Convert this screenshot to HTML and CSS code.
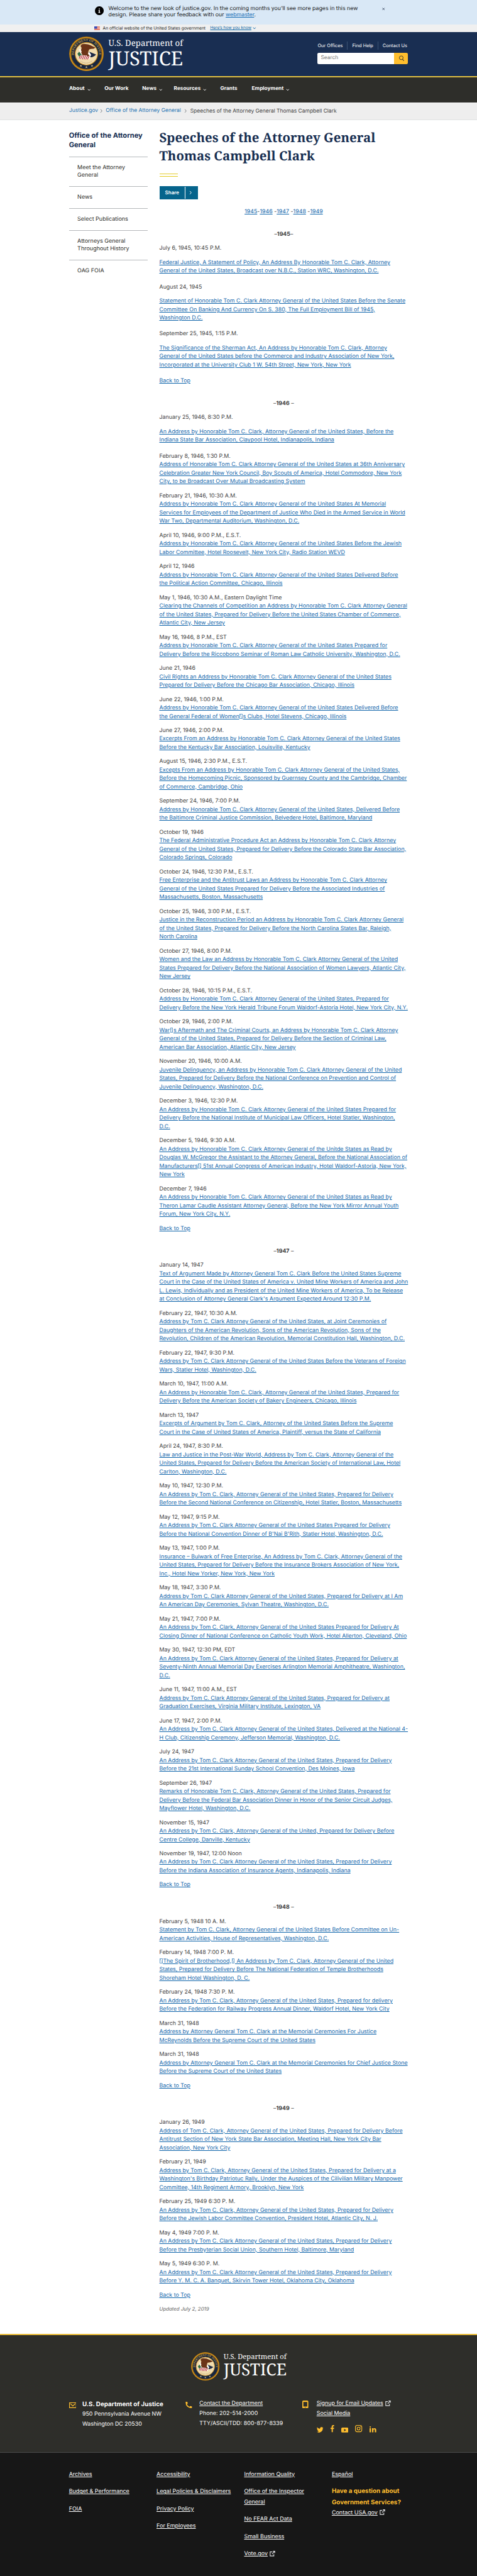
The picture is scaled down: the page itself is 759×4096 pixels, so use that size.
FILE: index.html
```html
<!DOCTYPE html>
<html lang="en">
<head>
<meta charset="utf-8">
<title>Speeches of the Attorney General Thomas Campbell Clark</title>
<link rel="stylesheet" href="styles.css">
</head>
<body>
<svg class="defs" aria-hidden="true">
  <symbol id="seal" viewBox="0 0 100 100">
    <circle cx="50" cy="50" r="50" fill="#8a5a10"/>
    <circle cx="50" cy="50" r="47.500" fill="none" stroke="#d99a20" stroke-width="2.600"/>
    <circle cx="50" cy="50" r="44.5" fill="#17263f"/>
    <circle cx="50" cy="50" r="44.5" fill="none" stroke="#b67a16" stroke-width="1"/>
    <circle cx="50" cy="50" r="32.5" fill="#f0dcae" stroke="#c98a1c" stroke-width="2"/>
    <path d="M24 50l5-6 7 8 4 3-1 3-11-1z" fill="#2c6b45"/>
    <path d="M28 37l10-1 3 14-6 2z" fill="#fff" opacity=".8"/>
    <path d="M58 44l20 8q-8 8-16 8l-6-8z" fill="#1c2944"/>
    <path d="M58 44l6 10-4 3-5-7z" fill="#fff"/>
    <path d="M36 23q6-3 11-1 8 0 14 3l15 7q-4 4-12 4l-6 1q-3 6-3 10l-2 8-5 3-8-2-5-9 1-5-2-2 2-7-3-6z" fill="#6b3418"/>
    <path d="M32 54l30 1-4 11-30-1z" fill="#fff"/>
    <path d="M33 55l-4 9M38 55l-5 10M43 55l-5 11M48 55l-5 11M53 56l-5 10M58 56l-5 10" stroke="#b3282d" stroke-width="2.200"/>
    <path d="M48 50l5-1 6 7-7 1z" fill="#6b3418"/>
    <path d="M33 71q17 12 34-1" fill="none" stroke="#b99b62" stroke-width="1.600" stroke-dasharray="2 1"/>
    <path d="M50 85l1 2.4 2.6.1-2 1.6.8 2.5-2.4-1.5-2.4 1.5.8-2.5-2-1.6 2.6-.1zM34 81l1 2.4 2.6.1-2 1.6.8 2.5-2.4-1.5-2.4 1.5.8-2.5-2-1.6 2.6-.1zM66 81l1 2.4 2.6.1-2 1.6.8 2.5-2.4-1.5-2.4 1.5.8-2.5-2-1.6 2.6-.1z" fill="#c9b98a"/>
  </symbol>
  <symbol id="down" viewBox="0 0 10 10"><path d="M1.500 3L5 6.800l3.500-3.800" fill="none" stroke="currentColor" stroke-width="1.700"/></symbol>
  <symbol id="right" viewBox="0 0 8 12"><path d="M2 1.500L6 6l-4 4.500" fill="none" stroke="currentColor" stroke-width="1.700"/></symbol>
  <symbol id="ext" viewBox="0 0 16 16"><path d="M7.500 3H1.500v11.500H12V9.500M9.500 1.200h5v5M14 1.700L7 9" fill="none" stroke="currentColor" stroke-width="2"/></symbol>
</svg>

<div class="alert">
  <svg class="alert-icon" viewBox="0 0 24 24"><circle cx="12" cy="12" r="12" fill="#000"/><path d="M10.700 6h2.600v2.600h-2.600zM10 10.200h3.300V16H14.500v1.800h-5V16h1.200v-4H9.800z" fill="#fff"/></svg>
  <p class="alert-text">Welcome to the new look of justice.gov. In the coming months you’ll see more pages in this new<br>design. Please share your feedback with our <a href="#">webmaster</a>.</p>
  <svg class="alert-close" viewBox="0 0 8 8"><path d="M1 1l6 6M7 1L1 7" stroke="#2b3a55" stroke-width="1.500"/></svg>
</div>

<div class="banner">
  <svg class="flag" viewBox="0 0 16 11"><path fill="#fff" d="M0 0h16v11H0z"/><path d="M0 .8h16M0 3.200h16M0 5.600h16M0 8h16M0 10.300h16" stroke="#db3e1f" stroke-width="1.300"/><path fill="#1e33b1" d="M0 0h8v6.300H0z"/><path d="M1 1.500h6M1.500 3.200h6M1 4.900h6" stroke="#fff" stroke-width=".6" stroke-dasharray=".8 1"/></svg>
  <span class="banner-text">An official website of the United States government</span>
  <a class="banner-link" href="#">Here’s how you know</a>
  <svg class="banner-arrow"><use href="#down"/></svg>
</div>

<header class="header">
  <svg class="seal" viewBox="0 0 100 100"><use href="#seal"/><path id="ring-top" d="M19.200 69.500A36.500 36.500 0 1 1 80.800 69.500" fill="none"/><text class="seal-text"><textPath href="#ring-top" startOffset="50%" text-anchor="middle">DEPARTMENT OF JUSTICE</textPath></text></svg>
  <div class="wordmark">
    <span class="wm-top">U.S. Department of</span>
    <span class="wm-main">JUSTICE</span>
  </div>
  <div class="header-tools">
    <div class="header-links"><a href="#">Our Offices</a><a href="#">Find Help</a><a href="#">Contact Us</a></div>
    <div class="search">
      <span class="search-input">Search</span>
      <span class="search-btn"><svg viewBox="0 0 16 16"><circle cx="7.500" cy="6.500" r="5" fill="none" stroke="#2e2e2a" stroke-width="1.500"/><path d="M10.800 10.500l3.600 4" stroke="#2e2e2a" stroke-width="1.800"/></svg></span>
    </div>
  </div>
</header>

<nav class="nav">
  <a class="n1" href="#">About<svg><use href="#down"/></svg></a>
  <a class="n2" href="#">Our Work</a>
  <a class="n3" href="#">News<svg><use href="#down"/></svg></a>
  <a class="n4" href="#">Resources<svg><use href="#down"/></svg></a>
  <a class="n5" href="#">Grants</a>
  <a class="n6" href="#">Employment<svg><use href="#down"/></svg></a>
</nav>

<div class="crumbs">
  <a class="c1" href="#">Justice.gov</a><svg><use href="#right"/></svg>
  <a class="c2" href="#">Office of the Attorney General</a><svg><use href="#right"/></svg>
  <span class="c3">Speeches of the Attorney General Thomas Campbell Clark</span>
</div>

<main class="main">
  <aside class="side">
    <h2>Office of the Attorney<br>General</h2>
    <ul>
      <li>Meet the Attorney<br>General</li>
      <li>News</li>
      <li>Select Publications</li>
      <li>Attorneys General<br>Throughout History</li>
      <li>OAG FOIA</li>
    </ul>
  </aside>

  <article class="content">
    <h1>Speeches of the Attorney General<br>Thomas Campbell Clark</h1>
    <div class="rule"></div>
    <div class="share"><span class="share-label">Share</span><span class="share-arrow"><svg><use href="#right"/></svg></span></div>

    <p class="years"><a href="#">1945</a><i>-</i><a href="#">1946</a><i> -</i><a href="#">1947</a><i> -</i><a href="#">1948</a><i> -</i><a href="#">1949</a></p>

    <h3>–<b>1945</b>–</h3>
    <p>July 6, 1945, 10:45 P.M.</p>
    <p class="spaced"><a href="#">Federal Justice, A Statement of Policy, An Address By Honorable Tom C. Clark, Attorney<br>General of the United States, Broadcast over N.B.C., Station WRC, Washington, D.C.</a></p>
    <p>August 24, 1945</p>
    <p class="spaced"><a href="#">Statement of Honorable Tom C. Clark Attorney General of the United States Before the Senate<br>Committee On Banking And Currency On S. 380, The Full Employment Bill of 1945,<br>Washington D.C.</a></p>
    <p>September 25, 1945, 1:15 P.M.</p>
    <p class="spaced"><a href="#">The Significance of the Sherman Act, An Address by Honorable Tom C. Clark, Attorney<br>General of the United States before the Commerce and Industry Association of New York,<br>Incorporated at the University Club 1 W. 54th Street, New York, New York</a></p>
    <p><a href="#">Back to Top</a></p>

    <h3>–<b>1946</b> –</h3>
    <p>January 25, 1946, 8:30 P.M.</p>
    <p class="spaced"><a href="#">An Address by Honorable Tom C. Clark, Attorney General of the United States, Before the<br>Indiana State Bar Association, Claypool Hotel, Indianapolis, Indiana</a></p>
    <p>February 8, 1946, 1:30 P.M.<br><a href="#">Address of Honorable Tom C. Clark Attorney General of the United States at 36th Anniversary<br>Celebration Greater New York Council, Boy Scouts of America, Hotel Commodore, New York<br>City, to be Broadcast Over Mutual Broadcasting System</a></p>
    <p>February 21, 1946, 10:30 A.M.<br><a href="#">Address by Honorable Tom C. Clark Attorney General of the United States At Memorial<br>Services for Employees of the Department of Justice Who Died in the Armed Service in World<br>War Two, Departmental Auditorium, Washington, D.C.</a></p>
    <p>April 10, 1946, 9:00 P.M., E.S.T.<br><a href="#">Address by Honorable Tom C. Clark Attorney General of the United States Before the Jewish<br>Labor Committee, Hotel Roosevelt, New York City, Radio Station WEVD</a></p>
    <p>April 12, 1946<br><a href="#">Address by Honorable Tom C. Clark Attorney General of the United States Delivered Before<br>the Political Action Committee, Chicago, Illinois</a></p>
    <p>May 1, 1946, 10:30 A.M., Eastern Daylight Time<br><a href="#">Clearing the Channels of Competition an Address by Honorable Tom C. Clark Attorney General<br>of the United States, Prepared for Delivery Before the United States Chamber of Commerce,<br>Atlantic City, New Jersey</a></p>
    <p>May 16, 1946, 8 P.M., EST<br><a href="#">Address by Honorable Tom C. Clark Attorney General of the United States Prepared for<br>Delivery Before the Riccobono Seminar of Roman Law Catholic University, Washington, D.C.</a></p>
    <p>June 21, 1946<br><a href="#">Civil Rights an Address by Honorable Tom C. Clark Attorney General of the United States<br>Prepared for Delivery Before the Chicago Bar Association, Chicago, Illinois</a></p>
    <p>June 22, 1946, 1:00 P.M.<br><a href="#">Address by Honorable Tom C. Clark Attorney General of the United States Delivered Before<br>the General Federal of Women<span class="box"></span>s Clubs, Hotel Stevens, Chicago, Illinois</a></p>
    <p>June 27, 1946, 2:00 P.M.<br><a href="#">Excerpts From an Address by Honorable Tom C. Clark Attorney General of the United States<br>Before the Kentucky Bar Association, Louisville, Kentucky</a></p>
    <p>August 15, 1946, 2:30 P.M., E.S.T.<br><a href="#">Excepts From an Address by Honorable Tom C. Clark Attorney General of the United States,<br>Before the Homecoming Picnic, Sponsored by Guernsey County and the Cambridge, Chamber<br>of Commerce, Cambridge, Ohio</a></p>
    <p>September 24, 1946, 7:00 P.M.<br><a href="#">Address by Honorable Tom C. Clark Attorney General of the United States, Delivered Before<br>the Baltimore Criminal Justice Commission, Belvedere Hotel, Baltimore, Maryland</a></p>
    <p>October 19, 1946<br><a href="#">The Federal Administrative Procedure Act an Address by Honorable Tom C. Clark Attorney<br>General of the United States, Prepared for Delivery Before the Colorado State Bar Association,<br>Colorado Springs, Colorado</a></p>
    <p>October 24, 1946, 12:30 P.M., E.S.T.<br><a href="#">Free Enterprise and the Antitrust Laws an Address by Honorable Tom C. Clark Attorney<br>General of the United States Prepared for Delivery Before the Associated Industries of<br>Massachusetts, Boston, Massachusetts</a></p>
    <p>October 25, 1946, 3:00 P.M., E.S.T.<br><a href="#">Justice in the Reconstruction Period an Address by Honorable Tom C. Clark Attorney General<br>of the United States, Prepared for Delivery Before the North Carolina States Bar, Raleigh,<br>North Carolina</a></p>
    <p>October 27, 1946, 8:00 P.M.<br><a href="#">Women and the Law an Address by Honorable Tom C. Clark Attorney General of the United<br>States Prepared for Delivery Before the National Association of Women Lawyers, Atlantic City,<br>New Jersey</a></p>
    <p>October 28, 1946, 10:15 P.M., E.S.T.<br><a href="#">Address by Honorable Tom C. Clark Attorney General of the United States, Prepared for<br>Delivery Before the New York Herald Tribune Forum Waldorf-Astoria Hotel, New York City, N.Y.</a></p>
    <p>October 29, 1946, 2:00 P.M.<br><a href="#">War<span class="box"></span>s Aftermath and The Criminal Courts, an Address by Honorable Tom C. Clark Attorney<br>General of the United States, Prepared for Delivery Before the Section of Criminal Law,<br>American Bar Association, Atlantic City, New Jersey</a></p>
    <p>November 20, 1946, 10:00 A.M.<br><a href="#">Juvenile Delinquency, an Address by Honorable Tom C. Clark Attorney General of the United<br>States, Prepared for Delivery Before the National Conference on Prevention and Control of<br>Juvenile Delinquency, Washington, D.C.</a></p>
    <p>December 3, 1946, 12:30 P.M.<br><a href="#">An Address by Honorable Tom C. Clark Attorney General of the United States Prepared for<br>Delivery Before the National Institute of Municipal Law Officers, Hotel Statler, Washington,<br>D.C.</a></p>
    <p>December 5, 1946, 9:30 A.M.<br><a href="#">An Address by Honorable Tom C. Clark Attorney General of the Unitde States as Read by<br>Douglas W. McGregor the Assistant to the Attorney General, Before the National Association of<br>Manufacturers<span class="box"></span> 51st Annual Congress of American Industry, Hotel Waldorf-Astoria, New York,<br>New York</a></p>
    <p>December 7, 1946<br><a href="#">An Address by Honorable Tom C. Clark Attorney General of the United States as Read by<br>Theron Lamar Caudle Assistant Attorney General, Before the New York Mirror Annual Youth<br>Forum, New York City, N.Y.</a></p>
    <p><a href="#">Back to Top</a></p>

    <h3>–<b>1947</b> –</h3>
    <p>January 14, 1947<br><a href="#">Text of Argument Made by Attorney General Tom C. Clark Before the United States Supreme<br>Court in the Case of the United States of America v. United Mine Workers of America and John<br>L. Lewis, Individually and as President of the United Mine Workers of America, To be Release<br>at Conclusion of Attorney General Clark's Argument Expected Around 12:30 P.M.</a></p>
    <p>February 22, 1947, 10:30 A.M.<br><a href="#">Address by Tom C. Clark Attorney General of the United States, at Joint Ceremonies of<br>Daughters of the American Revolution, Sons of the American Revolution, Sons of the<br>Revolution, Children of the American Revolution, Memorial Constitution Hall, Washington, D.C.</a></p>
    <p>February 22, 1947, 9:30 P.M.<br><a href="#">Address by Tom C. Clark Attorney General of the United States Before the Veterans of Foreign<br>Wars, Statler Hotel, Washington, D.C.</a></p>
    <p>March 10, 1947, 11:00 A.M.<br><a href="#">An Address by Honorable Tom C. Clark, Attorney General of the United States, Prepared for<br>Delivery Before the American Society of Bakery Engineers, Chicago, Illinois</a></p>
    <p>March 13, 1947<br><a href="#">Excerpts of Argument by Tom C. Clark, Attorney of the United States Before the Supreme<br>Court in the Case of United States of America, Plaintiff, versus the State of California</a></p>
    <p>April 24, 1947, 8:30 P.M.<br><a href="#">Law and Justice in the Post-War World, Address by Tom C. Clark, Attorney General of the<br>United States, Prepared for Delivery Before the American Society of International Law, Hotel<br>Carlton, Washington, D.C.</a></p>
    <p>May 10, 1947, 12:30 P.M.<br><a href="#">An Address by Tom C. Clark, Attorney General of the United States, Prepared for Delivery<br>Before the Second National Conference on Citizenship, Hotel Statler, Boston, Massachusetts</a></p>
    <p>May 12, 1947, 9:15 P.M.<br><a href="#">An Address by Tom C. Clark Attorney General of the United States Prepared for Delivery<br>Before the National Convention Dinner of B'Nai B'Rith, Statler Hotel, Washington, D.C.</a></p>
    <p>May 13, 1947, 1:00 P.M.<br><a href="#">Insurance – Bulwark of Free Enterprise, An Address by Tom C. Clark, Attorney General of the<br>United States, Prepared for Delivery Before the Insurance Brokers Association of New York,<br>Inc., Hotel New Yorker, New York, New York</a></p>
    <p>May 18, 1947, 3:30 P.M.<br><a href="#">Address by Tom C. Clark Attorney General of the United States, Prepared for Delivery at I Am<br>An American Day Ceremonies, Sylvan Theatre, Washington, D.C.</a></p>
    <p>May 21, 1947, 7:00 P.M.<br><a href="#">An Address by Tom C. Clark, Attorney General of the United States Prepared for Delivery At<br>Closing Dinner of National Conference on Catholic Youth Work, Hotel Allerton, Cleveland, Ohio</a></p>
    <p>May 30, 1947, 12:30 PM, EDT<br><a href="#">An Address by Tom C. Clark Attorney General of the United States, Prepared for Delivery at<br>Seventy-Ninth Annual Memorial Day Exercises Arlington Memorial Amphitheatre, Washington,<br>D.C.</a></p>
    <p>June 11, 1947, 11:00 A.M., EST<br><a href="#">Address by Tom C. Clark Attorney General of the United States, Prepared for Delivery at<br>Graduation Exercises, Virginia Military Institute, Lexington, VA</a></p>
    <p>June 17, 1947, 2:00 P.M.<br><a href="#">An Address by Tom C. Clark Attorney General of the United States, Delivered at the National 4-<br>H Club, Citizenship Ceremony, Jefferson Memorial, Washington, D.C.</a></p>
    <p>July 24, 1947<br><a href="#">An Address by Tom C. Clark Attorney General of the United States, Prepared for Delivery<br>Before the 21st International Sunday School Convention, Des Moines, Iowa</a></p>
    <p>September 26, 1947<br><a href="#">Remarks of Honorable Tom C. Clark, Attorney General of the United States, Prepared for<br>Delivery Before the Federal Bar Association Dinner in Honor of the Senior Circuit Judges,<br>Mayflower Hotel, Washington, D.C.</a></p>
    <p>November 15, 1947<br><a href="#">An Address by Tom C. Clark, Attorney General of the United, Prepared for Delivery Before<br>Centre College, Danville, Kentucky</a></p>
    <p>November 19, 1947, 12:00 Noon<br><a href="#">An Address by Tom C. Clark Attorney General of the United States, Prepared for Delivery<br>Before the Indiana Association of Insurance Agents, Indianapolis, Indiana</a></p>
    <p><a href="#">Back to Top</a></p>

    <h3>–<b>1948</b> –</h3>
    <p>February 5, 1948 10 A. M.<br><a href="#">Statement by Tom C. Clark, Attorney General of the United States Before Committee on Un-<br>American Activities, House of Representatives, Washington, D.C.</a></p>
    <p>February 14, 1948 7:00 P. M.<br><a href="#"><span class="box"></span>The Spirit of Brotherhood,<span class="box"></span> An Address by Tom C. Clark, Attorney General of the United<br>States, Prepared for Delivery Before The National Federation of Temple Brotherhoods<br>Shoreham Hotel Washington, D. C.</a></p>
    <p>February 24, 1948 7:30 P. M.<br><a href="#">An Address by Tom C. Clark, Attorney General of the United States, Prepared for delivery<br>Before the Federation for Railway Progress Annual Dinner, Waldorf Hotel, New York City</a></p>
    <p>March 31, 1948<br><a href="#">Address by Attorney General Tom C. Clark at the Memorial Ceremonies For Justice<br>McReynolds Before the Supreme Court of the United States</a></p>
    <p>March 31, 1948<br><a href="#">Address by Attorney General Tom C. Clark at the Memorial Ceremonies for Chief Justice Stone<br>Before the Supreme Court of the United States</a></p>
    <p><a href="#">Back to Top</a></p>

    <h3>–<b>1949</b> –</h3>
    <p>January 26, 1949<br><a href="#">Address of Tom C. Clark, Attorney General of the United States, Prepared for Delivery Before<br>Antitrust Section of New York State Bar Association, Meeting Hall, New York City Bar<br>Association, New York City</a></p>
    <p>February 21, 1949<br><a href="#">Address by Tom C. Clark, Attorney General of the United States, Prepared for Delivery at a<br>Washington's Birthday Patriotuc Rally, Under the Auspices of the Cilivilian Military Manpower<br>Committee, 14th Regiment Armory, Brooklyn, New York</a></p>
    <p>February 25, 1949 6:30 P. M.<br><a href="#">An Address by Tom C. Clark, Attorney General of the United States, Prepared for Delivery<br>Before the Jewish Labor Committee Convention, President Hotel, Atlantic City, N. J.</a></p>
    <p>May 4, 1949 7:00 P. M.<br><a href="#">An Address by Tom C. Clark Attorney General of the United States, Prepared for Delivery<br>Before the Presbyterian Social Union, Southern Hotel, Baltimore, Maryland</a></p>
    <p>May 5, 1949 6:30 P. M.<br><a href="#">An Address by Tom C. Clark Attorney General of the United States, Prepared for Delivery<br>Before Y. M. C. A. Banquet, Skirvin Tower Hotel, Oklahoma City, Oklahoma</a></p>
    <p><a href="#">Back to Top</a></p>
    <p class="updated">Updated July 2, 2019</p>
  </article>
</main>

<footer>
  <div class="foot-top">
    <div class="foot-logo">
      <svg class="seal" viewBox="0 0 100 100"><use href="#seal"/><path id="ring-foot" d="M19.200 69.500A36.500 36.500 0 1 1 80.800 69.500" fill="none"/><text class="seal-text"><textPath href="#ring-foot" startOffset="50%" text-anchor="middle">DEPARTMENT OF JUSTICE</textPath></text></svg>
      <div class="wordmark">
        <span class="wm-top">U.S. Department of</span>
        <span class="wm-main">JUSTICE</span>
      </div>
    </div>
    <div class="contacts">
      <div class="contact">
        <svg class="mail" viewBox="0 0 21 16"><path d="M1 1h19v14H1zM3.500 3.500l7 6.500 7-6.500" fill="none" stroke="#ffbe2e" stroke-width="2"/></svg>
        <div class="lines address"><strong>U.S. Department of Justice</strong><span>950 Pennsylvania Avenue NW</span><span>Washington DC 20530</span></div>
      </div>
      <div class="contact">
        <svg class="phone" viewBox="0 0 18 18"><path d="M0 1q0-1 1-1h3.300q.8 0 1 .9l.7 3.200q.1.700-.4 1.200L3.700 7q2.300 4.700 7.200 7.300l1.900-2q.5-.5 1.200-.3l3.200.8q.8.200.8 1V17q0 1-1 1Q9 18 4.500 13.500T0 1z" fill="#ffbe2e"/></svg>
        <div class="lines"><a href="#">Contact the Department</a><span>Phone: 202-514-2000</span><span>TTY/ASCII/TDD: 800-877-8339</span></div>
      </div>
      <div class="contact">
        <svg class="mobile" viewBox="0 0 17 22"><path fill-rule="evenodd" d="M3 0h11q3 0 3 3v16q0 3-3 3H3q-3 0-3-3V3q0-3 3-3zm0 4v13h11V4zm4 14.600v1.400h3v-1.400z" fill="#ffbe2e"/></svg>
        <div class="lines"><span><a href="#">Signup for Email Updates</a><svg class="ext"><use href="#ext"/></svg></span><a href="#">Social Media</a>
          <div class="social">
            <svg class="tw" viewBox="0 2 24 20"><path d="M24 4.600a10 10 0 0 1-2.800.8A5 5 0 0 0 23.300 2.700a10 10 0 0 1-3.100 1.200 4.900 4.900 0 0 0-8.400 4.500A14 14 0 0 1 1.700 3.200a4.900 4.900 0 0 0 1.500 6.500A5 5 0 0 1 1 9.100a4.900 4.900 0 0 0 4 4.900 5 5 0 0 1-2.200.1 4.900 4.900 0 0 0 4.600 3.400A9.900 9.900 0 0 1 0 19.500 14 14 0 0 0 21.500 7q1.500-1 2.500-2.400z"/></svg>
            <svg class="fb" viewBox="0 0 10 20"><path d="M3 20V11H0V7.500h3V5q0-5 4.500-5H10v3.500H8q-1.500 0-1.500 1.700v2.300H10L9.500 11h-3v9z"/></svg>
            <svg class="yt" viewBox="0 0 20 14"><path fill-rule="evenodd" d="M3 0h14q3 0 3 3v8q0 3-3 3H3q-3 0-3-3V3q0-3 3-3zm5 3.500v7l6-3.500z"/></svg>
            <svg class="ig" viewBox="0 0 20 20"><rect x="1" y="1" width="18" height="18" rx="5" fill="none" stroke="#ffbe2e" stroke-width="2"/><circle cx="10" cy="10" r="4.200" fill="none" stroke="#ffbe2e" stroke-width="2"/><circle cx="15.300" cy="4.700" r="1.200"/></svg>
            <svg class="li" viewBox="0 0 19 17"><path d="M0 5.500h4V17H0zM7 5.500h3.700V7q1-1.800 3.600-1.800Q19 5.200 19 10.500V17h-4v-6q0-2.500-1.900-2.500Q11 8.500 11 11.200V17H7z"/><circle cx="2" cy="2" r="2"/></svg>
          </div>
        </div>
      </div>
    </div>
  </div>
  <div class="foot-bottom">
    <ul><li><a href="#">Archives</a></li><li><a href="#">Budget &amp; Performance</a></li><li><a href="#">FOIA</a></li></ul>
    <ul><li><a href="#">Accessibility</a></li><li><a href="#">Legal Policies &amp; Disclaimers</a></li><li><a href="#">Privacy Policy</a></li><li><a href="#">For Employees</a></li></ul>
    <ul><li><a href="#">Information Quality</a></li><li><a href="#">Office of the Inspector<br>General</a></li><li><a href="#">No FEAR Act Data</a></li><li><a href="#">Small Business</a></li><li><a href="#">Vote.gov</a><svg class="ext"><use href="#ext"/></svg></li></ul>
    <ul><li class="lang"><a href="#">Español</a></li><li class="question">Have a question about<br>Government Services?</li><li><a href="#">Contact USA.gov</a><svg class="ext"><use href="#ext"/></svg></li></ul>
  </div>
</footer>
</body>
</html>
```
FILE: styles.css
```css
html { font-size: 5.622px; }
* { box-sizing: border-box; }
body {
  margin: 0;
  width: 759px;
  background: #fff;
  color: #3d3d3d;
  font: 1.575rem/2.4rem Inter, "Open Sans", sans-serif;
  text-rendering: geometricPrecision;
  white-space: nowrap;
}
p, h1, h2, h3, ul { margin: 0; padding: 0; }
ul { list-style: none; }
svg { display: block; flex: none; }
i { font-style: normal; }
.defs { position: absolute; width: 0; height: 0; }
.seal-text { font: bold 9.4px "Liberation Serif", serif; fill: #c9a24a; }

/* site alert */
.alert { display: flex; height: 6.95rem; padding: 1.55rem 0 0 26.9rem; background: #d9e8f6; }
.alert-icon { width: 2.5rem; height: 2.5rem; margin-top: .3rem; }
.alert-text { width: 74rem; margin-left: 1.3rem; font-size: 1.56rem; line-height: 1.85rem; color: #1b1b1b; }
.alert-text a { color: #1a6fb5; }
.alert-close { width: .8rem; height: .8rem; margin: .5rem 0 0 3.5rem; }

/* government banner */
.banner { display: flex; align-items: center; height: 2.18rem; padding-left: 26.7rem; background: #f0f0f0; font-size: 1.2rem; color: #1b1b1b; }
.flag { width: 1.6rem; height: 1.1rem; margin-right: .8rem; }
.banner-text { width: 30.4rem; }
.banner-link { width: 12.1rem; color: #005ea2; font-size: 1.163rem; }
.banner-arrow { width: 1rem; height: 1rem; color: #005ea2; }

/* header */
.header { display: flex; height: 12.8rem; padding: 1.25rem 0 0 19.6rem; background: #192e52; border-bottom: .4rem solid #e0bf42; color: #fff; }
.seal { width: 9.8rem; height: 9.8rem; }
.wordmark { display: flex; flex-direction: column; font-family: "Noto Serif", "Liberation Serif", serif; color: #fff; }
.header .wordmark { width: 60.5rem; padding: .25rem 0 0 1.3rem; }
.header .wm-top { font-size: 2.36rem; line-height: 3rem; }
.header .wm-main { font-size: 5.53rem; line-height: 5rem; margin-top: .37rem; }
.header-links { display: flex; padding-top: 1.35rem; font-size: 1.32rem; }
.header-links a { color: #fff; text-decoration: none; }
.header-links a + a { margin-left: 1.25rem; padding-left: 1.25rem; border-left: 1px solid #3b5273; }
.header-tools { width: 25.6rem; }
.search { display: flex; height: 3.2rem; margin-top: .85rem; }
.search-input { width: 21.7rem; padding: .4rem .9rem; border-radius: .4rem 0 0 .4rem; background: #fff; color: #757575; font-size: 1.49rem; }
.search-btn { display: grid; place-items: center; width: 3.9rem; border-radius: 0 .4rem .4rem 0; background: #ffbe2e; }
.search-btn svg { width: 1.7rem; height: 1.7rem; }

/* navigation */
.nav { display: flex; align-items: center; height: 7.08rem; padding: 0 0 .35rem 19.55rem; background: #2e2e2a; font-size: 1.478rem; font-weight: 700; }
.nav a { display: flex; align-items: center; color: #fff; text-decoration: none; }
.nav svg { width: 1rem; height: 1rem; margin: .3rem 0 0 .7rem; }
.n1 { width: 10rem; } .n2 { width: 10.7rem; } .n3 { width: 8.95rem; } .n4 { width: 13.15rem; } .n5 { width: 8.9rem; }

.crumbs { display: flex; align-items: center; height: 4.9rem; padding-left: 19.55rem; background: #eee; border-bottom: 1px solid #dfe1e2; border-top: 1px solid #f6f6f6; font-size: 1.506rem; }
.crumbs a { color: #2272b2; text-decoration: none; }
.crumbs svg { width: .8rem; height: 1.2rem; color: #71767a; }
.c1 { width: 8.75rem; } .c2 { width: 22.2rem; margin-left: .85rem; } .c3 { margin: .2rem 0 0 .9rem; }

/* page body */
.main { display: grid; grid-template-columns: 22.3rem 70.4rem; column-gap: 3.3rem; padding-left: 19.5rem; height: 626.1rem; }
.side { padding-top: 3.1rem; color: #2e2e2a; }
.side h2 { height: 7.2rem; font-size: 1.98rem; line-height: 2.75rem; color: #162e51; }
.side li { padding: 2rem 0 2rem 2.4rem; border-top: 1px solid #b5b8bb; font-size: 1.6rem; line-height: 2.1rem; }
.content { padding-top: 2.3rem; }
.content a { color: #1166ab; text-underline-offset: .2rem; text-decoration-thickness: 1px; }
h1 { font: bold 3.627rem/5.2rem "Noto Serif", "Liberation Serif", serif; color: #162e51; }
.rule { width: 5.2rem; height: .85rem; margin-top: 2.55rem; border-top: 1px solid #e3cc24; border-bottom: 1px solid #e3cc24; }
.share { display: flex; width: 10.9rem; height: 3.7rem; margin-top: 2.7rem; background: #05648c; color: #fff; font-size: 1.43rem; font-weight: 600; line-height: 3.6rem; }
.share-label { width: 7.2rem; padding-left: 1.6rem; }
.share-arrow { display: grid; align-items: center; width: 3.2rem; height: 3.5rem; margin-top: .1rem; padding-left: 1.1rem; border-left: 1px solid #fff; }
.share-arrow svg { width: .8rem; height: 1.2rem; }
.years { display: flex; justify-content: center; margin: 2.3rem 0 4rem; }
.years i { white-space: pre; }
h3 { margin: 4rem 0 1.6rem; font-size: 1.575rem; line-height: 2.4rem; font-weight: 400; text-align: center; }
.content p { margin-bottom: 1.6rem; }
.content .spaced { margin-bottom: 2.08rem; }
.content .updated { font-size: 1.4rem; font-style: italic; color: #5c5c5c; }
.box { display: inline-block; width: .85rem; height: 1.35rem; margin: 0 .1rem; vertical-align: -.2rem; border: 1px solid #6fa3cd; background: linear-gradient(to top right, transparent 40%, #6fa3cd 50%, transparent 60%); }

/* footer */
.foot-top { height: 33.7rem; border-top: .4rem solid #e9bc39; border-bottom: 1px solid #4a4a4a; background: #2e2e2a; color: #fff; font-size: 1.58rem; }
.foot-logo { display: flex; padding: 4.9rem 0 0 54rem; }
.foot-logo .seal { width: 8.1rem; height: 8.1rem; }
.foot-logo .wordmark { padding: .15rem 0 0 1.2rem; }
.foot-logo .wm-top { font-size: 1.99rem; line-height: 2.5rem; }
.foot-logo .wm-main { font-size: 4.67rem; line-height: 4.2rem; margin-top: .2rem; }
.contacts { display: grid; grid-template-columns: repeat(3, 33.05rem); padding: 5rem 0 0 19.5rem; }
.contact { display: flex; }
.lines { display: flex; flex-direction: column; line-height: 2.9rem; }
.lines > span { display: flex; align-items: center; }
.foot-top a, .foot-bottom a { color: #fff; text-underline-offset: .2rem; }
.address { padding-top: .2rem; }
.address strong { font-size: 1.748rem; }
.mail { width: 2.1rem; height: 1.6rem; margin: 1.1rem 1.7rem 0 0; }
.phone { width: 1.9rem; height: 1.8rem; margin: .9rem 2rem 0 0; }
.mobile { width: 1.7rem; height: 2.2rem; margin: .5rem 2.3rem 0 0; }
.ext { display: inline-block; width: 1.6rem; height: 1.6rem; margin-left: .6rem; vertical-align: -.25rem; color: #dcdee0; }
.social { display: flex; align-items: flex-end; height: 2.1rem; margin-top: 1.7rem; fill: #ffbe2e; }
.tw { width: 1.9rem; height: 1.6rem; margin-right: 2.1rem; }
.fb { width: 1rem; height: 2rem; margin-right: 2rem; }
.yt { width: 2rem; height: 1.4rem; margin-right: 2rem; }
.ig { width: 2rem; height: 2rem; margin-right: 2rem; }
.li { width: 1.9rem; height: 1.7rem; }
.foot-bottom { display: grid; grid-template-columns: repeat(4, 24.8rem); height: 34.8rem; padding: 4.75rem 0 0 19.5rem; background: #171717; color: #fff; font-size: 1.6rem; line-height: 2.9rem; }
.foot-bottom li { margin-bottom: 2rem; }
.foot-bottom .lang { margin-bottom: 1.6rem; }
.foot-bottom .question { margin-bottom: -.1rem; font-size: 1.76rem; font-weight: 700; line-height: 3.25rem; color: #ffbe2e; }
```
